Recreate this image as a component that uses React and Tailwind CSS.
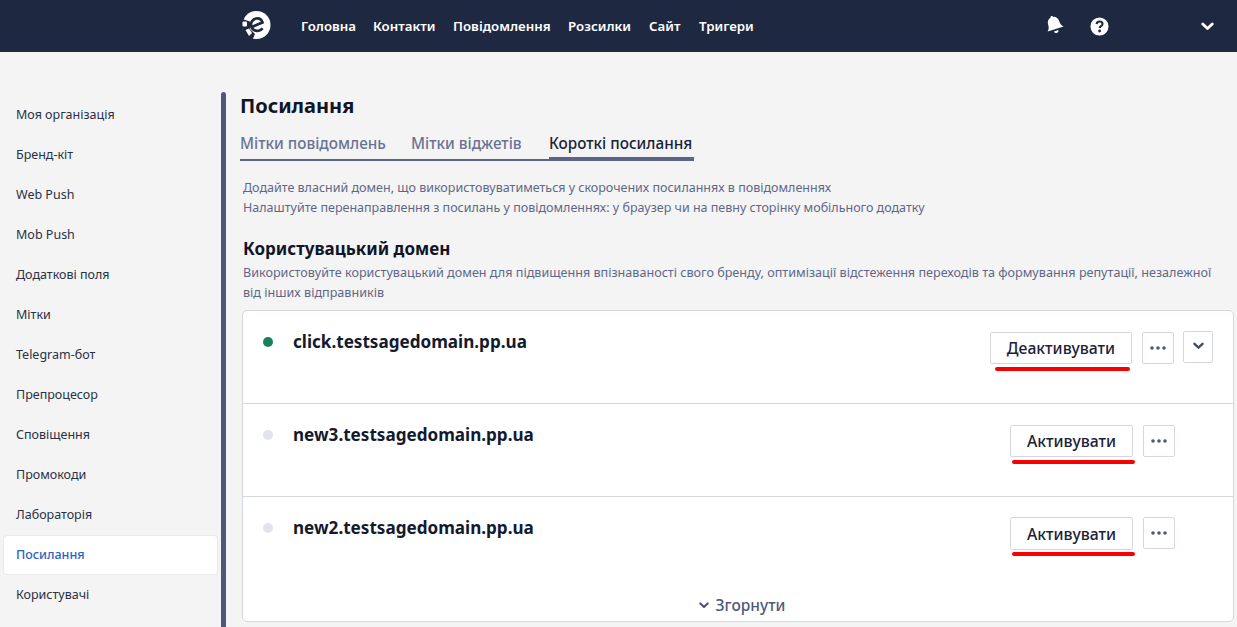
const font = { fontFamily: '"Noto Sans", sans-serif' };
const side = ["Моя організація","Бренд-кіт","Web Push","Mob Push","Додаткові поля","Мітки","Telegram-бот","Препроцесор","Сповіщення","Промокоди","Лабораторія","Посилання","Користувачі"];
const nav = [["Головна","w-[54px]"],["Контакти","w-[62px]"],["Повідомлення","w-[97px]"],["Розсилки","w-[63px]"],["Сайт","w-[32px]"],["Тригери","w-[55px]"]];

function Chevron({ className }) {
  return (
    <svg viewBox="0 0 12 8" className={className} fill="none" stroke="currentColor" strokeWidth="2.6" strokeLinecap="round" strokeLinejoin="round">
      <path d="M1.6 1.6 6 5.8l4.4-4.2" />
    </svg>
  );
}
function Dots() {
  return (
    <svg viewBox="0 0 16 4" className="w-[16px] h-[4px] text-[#4f5878]" fill="currentColor">
      <circle cx="2" cy="2" r="1.8" /><circle cx="8" cy="2" r="1.8" /><circle cx="14" cy="2" r="1.8" />
    </svg>
  );
}
function Row({ name, active, label, btnW, underline, chevron, mr }) {
  return (
    <div className={`flex items-start h-[93px] border-b border-[#d5d8e3] pl-[20px] ${mr}`}>
      <span className={`mt-[26px] w-[10px] h-[10px] rounded-full ${active ? "bg-[#17805f]" : "bg-[#e2e4ec]"}`} />
      <span className="ml-[20px] mt-[17px] text-[17.1px] leading-[27px] font-bold text-[#141a2e]">{name}</span>
      <div className="ml-auto flex items-start mt-[21px]">
        <div className={`relative ${btnW} h-[32px] pt-[2px] flex items-center justify-center bg-white border border-[#d5d8e3] rounded-[2px] text-[15.75px] font-medium text-[#1b2238]`}>
          {label}
          <span className={`absolute top-[34px] ${underline} h-[4px] bg-[#f90000] rounded-full`} />
        </div>
        <button className="ml-[10px] w-[32px] h-[32px] flex items-center justify-center bg-white border border-[#d5d8e3] rounded-[2px]"><Dots /></button>
        {chevron && (
          <button className="ml-[9px] -mt-[1px] w-[30px] h-[32px] flex items-center justify-center bg-white border border-[#d5d8e3] rounded-[2px] text-[#444d6e]"><Chevron className="w-[11px] h-[8px] -mt-[3px]" /></button>
        )}
      </div>
    </div>
  );
}

export default function App() {
  return (
    <div style={font} className="w-[1237px] h-[627px] overflow-hidden bg-[#f4f4f4] flex flex-col">
      <header className="h-[52px] shrink-0 bg-[#1f2841] flex items-center pl-[242px] text-white">
        <svg viewBox="0 0 32 32" className="w-[32px] h-[32px]">
          <circle cx="14.5" cy="15" r="14" fill="#fff" />
          <path d="M-1 8.500 9 12l-1 7 5 5-4 9H-1z" fill="#1f2841" />
          <rect x="0.500" y="11.500" width="4.500" height="5" rx="1" fill="#fff" />
          <path d="M3.500 20 7 18.500l3 4.500-3 3z" fill="#fff" />
          <path d="M8.500 17.500 20.500 12.500c-1-3-3.600-4.500-6.300-4-3.500.6-5.700 3.800-5.100 7.300.6 3.500 4 5.800 7.500 5 1.700-.4 3-1.200 4-2.500" fill="none" stroke="#1f2841" strokeWidth="2.700" />
        </svg>
        <nav className="ml-[27px] pt-[1px] flex items-center gap-[18px] text-[13.3px] font-semibold">
          {nav.map(([t, w]) => <a key={t} className={`${w} whitespace-nowrap`}>{t}</a>)}
        </nav>
        <div className="ml-auto flex items-center pr-[23px]">
          <svg viewBox="0 0 20 20" className="w-[21px] h-[21px] mr-[25px] -mt-[1px]" fill="#fff">
            <g transform="rotate(-18 10 10)">
              <path d="M10 .5c.8 0 1.300.6 1.300 1.300 2.700.6 4.200 2.800 4.200 5.500 0 3.600 1.200 4.800 2.500 6.200H2c1.300-1.400 2.500-2.600 2.500-6.200 0-2.700 1.500-4.900 4.200-5.500C8.700 1.100 9.200.5 10 .5z" />
              <path d="M7.800 15.200h4.400a2.200 2.200 0 0 1-4.400 0z" />
            </g>
          </svg>
          <svg viewBox="0 0 20 20" className="w-[19px] h-[19px] mr-[92px]">
            <circle cx="10" cy="10" r="9.500" fill="#fff" />
            <path d="M6.900 7.600c.2-1.900 1.500-2.900 3.200-2.900 1.800 0 3.100 1.100 3.100 2.600 0 2.300-3 2.300-3 4.300" fill="none" stroke="#1f2841" strokeWidth="2.200" />
            <circle cx="10.100" cy="14.700" r="1.500" fill="#1f2841" />
          </svg>
          <Chevron className="w-[13px] h-[9px] text-white" />
        </div>
      </header>

      <div className="flex flex-1 min-h-0 pt-[40px]">
        <aside className="w-[221px] shrink-0 pl-[3px] pr-[3px] pt-[3px]">
          {side.map((s) => (
            <div key={s} className={`h-[40px] flex items-center text-[12.5px] rounded-[4px] ${s === "Посилання" ? "pl-[12px] bg-white border border-[#e9e9ee] text-[#2c62c9] font-medium" : "pl-[13px] text-[#2a3045]"}`}>{s}</div>
          ))}
        </aside>
        <div className="w-[5px] shrink-0 bg-[#4f5878] rounded-t-[3px]" />
        <main className="flex-1 min-w-0 pl-[14px] pr-[3px]">
          <h1 className="text-[20px] leading-[28px] font-bold text-[#10152a]">Посилання</h1>
          <div className="mt-[11px] flex border-b-[2px] border-[#5c6486] w-[454px] h-[30px] text-[15.3px] font-medium whitespace-nowrap">
            <span className="w-[171px] pt-[1px] text-[#6a7293]">Мітки повідомлень</span>
            <span className="w-[138px] pt-[1px] text-[#6a7293]">Мітки віджетів</span>
            <span className="h-[30px] flex-1 pt-[1px] border-b-[4px] border-[#5c6486] text-[#1b2238]">Короткі посилання</span>
          </div>
          <div className="pl-[3px]">
            <p className="mt-[17px] text-[12.5px] leading-[20px] text-[#5f6788]">Додайте власний домен, що використовуватиметься у скорочених посиланнях в повідомленнях</p>
            <p className="text-[12.5px] leading-[20px] text-[#5f6788]">Налаштуйте перенаправлення з посилань у повідомленнях: у браузер чи на певну сторінку мобільного додатку</p>
            <h2 className="mt-[18px] text-[17px] leading-[26px] font-bold text-[#10152a]">Користувацький домен</h2>
            <p className="pt-[1px] w-[975px] text-[12.6px] leading-[20px] text-[#5f6788]">Використовуйте користувацький домен для підвищення впізнаваності свого бренду, оптимізації відстеження переходів та формування репутації, незалежної від інших відправників</p>
          </div>
          <section className="ml-[2px] mt-[7px] h-[312px] bg-white border border-[#d5d8e3] rounded-[5px] overflow-hidden flex flex-col">
            <Row name="click.testsagedomain.pp.ua" active label="Деактивувати" btnW="w-[142px]" underline="left-[4px] w-[135px]" mr="pr-[20px]" chevron />
            <Row name="new3.testsagedomain.pp.ua" label="Активувати" btnW="w-[123px]" underline="left-[1px] w-[123px]" mr="pr-[58px]" />
            <div className="flex items-start h-[83px] pl-[20px] pr-[58px]">
              <span className="mt-[26px] w-[10px] h-[10px] rounded-full bg-[#e2e4ec]" />
              <span className="ml-[20px] mt-[17px] text-[17.1px] leading-[27px] font-bold text-[#141a2e]">new2.testsagedomain.pp.ua</span>
              <div className="ml-auto flex items-start mt-[20px]">
                <div className="relative w-[123px] h-[33px] pt-[2px] flex items-center justify-center bg-white border border-[#d5d8e3] rounded-[2px] text-[15.75px] font-medium text-[#1b2238]">
                  Активувати
                  <span className="absolute top-[34px] left-[1px] w-[123px] h-[4px] bg-[#f90000] rounded-full" />
                </div>
                <button className="ml-[10px] w-[32px] h-[32px] flex items-center justify-center bg-white border border-[#d5d8e3] rounded-[2px]"><Dots /></button>
              </div>
            </div>
            <div className="flex-1 flex items-center justify-center pl-[8px] gap-[7px] text-[15.5px] font-medium text-[#4f5878] pt-[10px]">
              <Chevron className="w-[10px] h-[7px]" />
              Згорнути
            </div>
          </section>
        </main>
      </div>
    </div>
  );
}
